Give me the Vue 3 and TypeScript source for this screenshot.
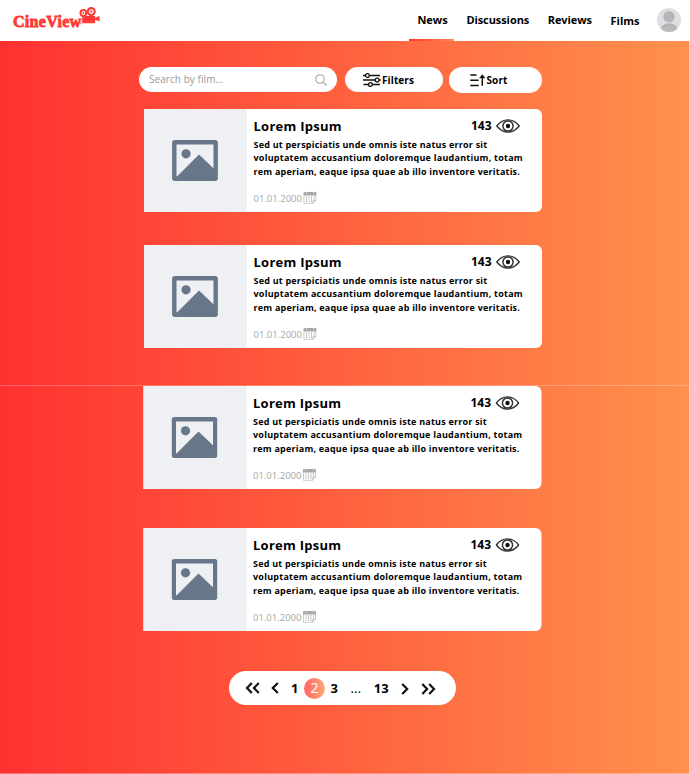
<script setup lang="ts">
interface Article {
  id: number
  title: string
  views: number
  lines: string[]
  date: string
}

const nav: string[] = ['News', 'Discussions', 'Reviews', 'Films']
const articles: Article[] = [1, 2, 3, 4].map((id) => ({
  id,
  title: 'Lorem Ipsum',
  views: 143,
  lines: [
    'Sed ut perspiciatis unde omnis iste natus error sit',
    'voluptatem accusantium doloremque laudantium, totam',
    'rem aperiam, eaque ipsa quae ab illo inventore veritatis.',
  ],
  date: '01.01.2000',
}))
</script>

<template>
  <div class="page">
    <header class="header">
      <div class="logo">
        <span class="brand">CineView</span>
        <svg class="camera" viewBox="0 0 21 18" width="21" height="18">
          <g fill="none" stroke="#ff3a37">
            <circle cx="4.4" cy="6" r="2.9" stroke-width="2" />
            <circle cx="12.2" cy="4.6" r="3.5" stroke-width="2.2" />
          </g>
          <circle cx="4.4" cy="6" r=".9" fill="#ff3a37" />
          <circle cx="12.2" cy="4.6" r="1.1" fill="#ff3a37" />
          <path d="M3.2 9h12.9v1.9L20.5 8.8v5.7l-4.4-1.8v3.5H3.2z" fill="#ff3a37" />
          <path d="M3 11.2 1.2 16.8M1 12.5h2M1 16.8h2" stroke="#ff7774" stroke-width=".8" />
        </svg>
      </div>
      <nav class="nav">
        <a v-for="(item, i) in nav" :key="item" class="link" :class="{ active: i === 0, last: i === 3 }">{{ item }}</a>
      </nav>
      <svg class="avatar" viewBox="0 0 24 24" width="24" height="24">
        <defs>
          <linearGradient id="face" x1="0" y1="0" x2="0" y2="1">
            <stop offset="0" stop-color="#afb1b4" />
            <stop offset="1" stop-color="#c2c4c6" />
          </linearGradient>
          <clipPath id="round"><circle cx="12" cy="12" r="12" /></clipPath>
        </defs>
        <g clip-path="url(#round)">
          <rect width="24" height="24" fill="#dfe0e2" />
          <ellipse cx="12" cy="22" rx="8.7" ry="6.8" fill="url(#face)" />
          <circle cx="12" cy="8.8" r="6" fill="#b3b5b8" stroke="#dfe0e2" stroke-width=".7" />
        </g>
      </svg>
    </header>

    <main class="main">
      <div class="tools">
        <label class="search">
          <span>Search by film...</span>
          <svg viewBox="0 0 12 12" width="12" height="12" fill="none" stroke="#a3a3a3" stroke-width="1.1">
            <circle cx="5" cy="5" r="4.3" />
            <path d="m8.1 8.1 3.4 3.4" />
          </svg>
        </label>
        <button class="pill filters">
          <svg viewBox="0 0 18 14" width="18" height="14" fill="none" stroke="#111" stroke-width="1.3">
            <path d="M0 2.5h2.4M6.4 2.5H17M0 7h12.2M16.2 7H17.8M.5 11.5h4.9M9.4 11.5H17" />
            <circle cx="4.4" cy="2.5" r="1.9" />
            <circle cx="14.2" cy="7" r="1.9" />
            <circle cx="7.4" cy="11.5" r="1.9" />
          </svg>
          <span>Filters</span>
        </button>
        <button class="pill sort">
          <svg viewBox="0 0 16 14" width="16" height="14" fill="none" stroke="#111" stroke-width="1.5">
            <path d="M.3 2h6.2M.3 7.3h8.4M.3 12.4h8.4M12.3 12.8V2.2" />
            <path d="m9.6 5 2.7-3.3L15 5z" fill="#111" stroke-width=".5" />
          </svg>
          <span>Sort</span>
        </button>
      </div>

      <section class="list">
        <article v-for="a in articles" :key="a.id" class="card" :class="'card-' + a.id">
          <div class="thumb">
            <svg viewBox="0 0 46 41" width="46" height="41">
              <rect x="2.3" y="2.3" width="41.4" height="36.4" rx=".5" fill="#eff0f3" stroke="#677789" stroke-width="4.4" />
              <circle cx="14" cy="13.8" r="4.6" fill="#677789" />
              <path d="M4 37.5 27 14.5l15.5 14.8v8.2z" fill="#677789" />
            </svg>
          </div>
          <div class="body">
            <div class="top">
              <h2>{{ a.title }}</h2>
              <div class="views">
                <span>{{ a.views }}</span>
                <svg viewBox="0 0 24 14" width="24" height="14" fill="none" stroke="#333">
                  <path d="M.8 7C4 3 7.800.9 12 .9S20 3 23.200 7C20 11 16.200 13.100 12 13.100S4 11 .8 7z" stroke-width="1.400" />
                  <circle cx="12" cy="7" r="5.100" stroke-width="1.500" />
                  <circle cx="12" cy="7" r="2.200" fill="#111" stroke="none" />
                </svg>
              </div>
            </div>
            <p>
              <span v-for="(line, i) in a.lines" :key="i" class="line" :class="'line-' + i">{{ line }}</span>
            </p>
            <div class="date">
              <span>{{ a.date }}</span>
              <svg viewBox="0 0 14 13" width="14" height="13" fill="none" stroke="#a6a6a6">
                <path d="M1 1.500h12v2.500H1z" fill="#aaa" stroke-width="1" />
                <path d="M.9 4v8.300h9l3-2.800V4M9.900 12.300V9.500h3" stroke-width=".6" />
                <path d="M3.500 0v3M10.500 0v3" stroke="#ddd" stroke-width=".8" />
                <path d="M3.500 5.200v6M6 5.200v6M8.500 5.200v6M11 5.200v3.500" stroke="#b4b4b4" stroke-width="1" stroke-dasharray="1.500 .6" />
              </svg>
            </div>
          </div>
        </article>
      </section>

      <nav class="pager">
        <svg class="first" viewBox="0 0 15 12" width="15" height="12"><path d="M6.800 1 2 6l4.800 5M13.800 1 9 6l4.800 5" /></svg>
        <svg class="prev" viewBox="0 0 8 12" width="8" height="12"><path d="M6.800 1 1.800 6l5 5" /></svg>
        <span class="n1">1</span>
        <span class="current">2</span>
        <span class="n3">3</span>
        <span class="dots">...</span>
        <span class="n13">13</span>
        <svg class="next" viewBox="0 0 8 12" width="8" height="12"><path d="m1.200 1 5 5-5 5" /></svg>
        <svg class="end" viewBox="0 0 15 12" width="15" height="12"><path d="m1.300 1 4.800 5-4.800 5M8.200 1 13 6l-4.800 5" /></svg>
      </nav>
    </main>
  </div>
</template>

<style>
body { margin: 0; overflow: hidden; }
</style>

<style scoped>
* { box-sizing: border-box; }
.page {
  width: 690px;
  height: 774px;
  font-family: "Open Sans", "Noto Sans", sans-serif;
  color: #000;
  background: #fff;
}
.header {
  display: flex;
  height: 41px;
  background: #fff;
}
.logo { display: flex; width: 409.400px; padding-left: 13px; }
.brand {
  width: 66px;
  padding-top: 12px;
  font: bold 16px/19px "Liberation Serif", serif;
  letter-spacing: .3px;
  color: #ff3a37;
  -webkit-text-stroke: .8px #ff3a37;
  white-space: nowrap;
}
.camera { margin-top: 7px; }
.nav { display: flex; }
.link {
  height: 41px;
  padding-top: 12px;
  font-size: 11px;
  line-height: 16px;
  font-weight: 700;
  letter-spacing: -.08px;
  margin-right: 18.600px;
}
.active {
  width: 45px;
  margin-right: 12px;
  padding-left: 8px;
  letter-spacing: 0;
  border-bottom: 2px solid;
  border-image: linear-gradient(90deg, #ff3535, #ff914d) 1;
}
.last { padding-top: 13px; letter-spacing: 0; }
.avatar { margin-left: -1px; margin-top: 8px; }
.main {
  width: 690px;
  height: 733px;
  padding-top: 26px;
  background:
    linear-gradient(rgba(255,255,255,.25), rgba(255,255,255,.25)) 0 344px / 100% 1px no-repeat,
    linear-gradient(rgba(255,255,255,.3), rgba(255,255,255,.3)) 0 732px / 100% 1px no-repeat,
    linear-gradient(rgba(255,255,255,.55), rgba(255,255,255,.55)) 689px 0 / 1px 100% no-repeat,
    linear-gradient(90deg, #ff3131, #ff914d);
}
.tools { display: flex; height: 26px; padding-left: 139px; }
.search {
  display: flex;
  align-items: center;
  justify-content: space-between;
  width: 198px;
  height: 25px;
  padding: 0 10px;
  border-radius: 13px;
  background: #fff;
  font-size: 10px;
  letter-spacing: .06px;
  color: #999;
}
.search span { margin-top: -1px; }
.pill {
  display: flex;
  align-items: center;
  height: 25px;
  border: 0;
  padding: 0;
  border-radius: 13px;
  background: #fff;
  color: #000;
  font: 700 10px "Open Sans", sans-serif;
  letter-spacing: .1px;
}
.filters { width: 98px; margin-left: 8px; padding-left: 18px; gap: 1px; }
.sort { width: 93px; height: 26px; margin-left: 6px; padding-left: 21px; gap: .5px; }
.sort span, .sort svg { margin-top: -1px; }
.list { padding: 16px 0 0 143.500px; }
.card {
  display: flex;
  width: 398.500px;
  height: 103px;
  background: #fff;
  border-radius: 0 6px 6px 0;
}
.card-1 { margin-bottom: 33px; }
.card-2 { margin-bottom: 38px; }
.card-3 { margin-bottom: 39px; }
.card-3, .card-4 { transform: translateX(-.5px); }
.thumb {
  display: flex;
  align-items: center;
  justify-content: center;
  width: 103px;
  height: 103px;
  background: #eff0f3;
}
.thumb svg { margin-left: -1px; }
.body { width: 273px; margin-left: 7px; }
.top { display: flex; justify-content: space-between; height: 29px; padding-top: 7px; }
h2 { margin: 0; font-size: 13px; line-height: 20px; font-weight: 700; letter-spacing: .27px; }
.views { display: flex; gap: 4px; height: 20px; margin-right: 7px; font-size: 12px; line-height: 20px; font-weight: 700; }
.views svg { margin-top: 3px; }
p { margin: 0; font-size: 9px; font-weight: 700; }
.line { display: block; height: 13.400px; line-height: 14px; white-space: nowrap; }
.line-0 { letter-spacing: .21px; }
.line-1 { letter-spacing: .24px; }
.line-2 { letter-spacing: .21px; }
.date { display: flex; gap: 1px; margin-top: 13px; font-size: 9.500px; line-height: 15px; color: #a6a6a6; }
.pager {
  display: flex;
  align-items: center;
  width: 227px;
  height: 34px;
  margin: 40px 0 0 229px;
  padding-left: 15.500px;
  border-radius: 17px;
  background: #fff;
  font-size: 13px;
  font-weight: 700;
}
.pager svg { fill: none; stroke: #111; stroke-width: 2.200; }
.prev { margin-left: 11.500px; }
.n1 { width: 8px; margin-left: 12px; }
.current {
  width: 21px;
  height: 21px;
  margin-left: 5px;
  border-radius: 50%;
  background: linear-gradient(90deg, #ff6464, #ffa978);
  color: #fff;
  font-weight: 400;
  font-size: 14px;
  line-height: 20px;
  text-align: center;
}
.n3 { width: 8px; margin-left: 5.500px; }
.dots { width: 12px; margin-left: 12px; font-weight: 400; letter-spacing: .2px; }
.n13 { width: 16px; margin-left: 11.300px; }
.next { margin-left: 11.200px; margin-top: 1px; }
.end { margin-left: 12px; margin-top: 1px; }
</style>
